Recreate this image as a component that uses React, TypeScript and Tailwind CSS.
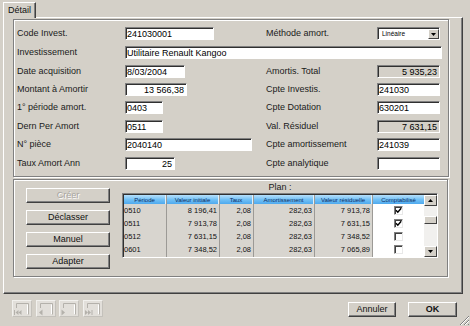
import React from "react";

const FONT = "font-['Liberation_Sans',Arial,sans-serif]";

function Input({
  w,
  value = "",
  right = false,
  gray = false,
}: {
  w: string;
  value?: string;
  right?: boolean;
  gray?: boolean;
}) {
  return (
    <div
      className={`${w} h-[13px] shrink-0 ${gray ? "bg-[#d4d0c8]" : "bg-white"} border border-t-[#808080] border-l-[#808080] border-b-white border-r-white`}
    >
      <div
        className={`h-full w-full border-t border-l border-t-[#303030] border-l-[#303030] flex items-center ${right ? "justify-end pr-[2px]" : "pl-[0px]"} text-[9px] leading-none text-black whitespace-nowrap overflow-hidden`}
      >
        {value}
      </div>
    </div>
  );
}

function Label({ children, w }: { children: React.ReactNode; w: string }) {
  return (
    <div className={`${w} shrink-0 text-[9px] leading-none text-[#1a1a1a] whitespace-nowrap`}>
      {children}
    </div>
  );
}

function Btn({
  children,
  w,
  disabled = false,
  bold = false,
}: {
  children: React.ReactNode;
  w: string;
  disabled?: boolean;
  bold?: boolean;
}) {
  return (
    <div
      className={`${w} h-[15px] shrink-0 bg-[#d4d0c8] border border-t-white border-l-white border-b-[#404040] border-r-[#404040] shadow-[inset_-1px_-1px_0_#808080] flex items-center justify-center text-[9px] leading-none ${bold ? "font-bold" : ""} ${disabled ? "text-[#a8a5a0] [text-shadow:1px_1px_0_#fff]" : "text-[#111]"}`}
    >
      {children}
    </div>
  );
}

function Check({ on }: { on: boolean }) {
  return (
    <div className="w-[9px] h-[9px] bg-white border border-t-[#808080] border-l-[#808080] border-b-[#e8e8e8] border-r-[#e8e8e8] shadow-[inset_1px_1px_0_#404040] flex items-center justify-center">
      {on && (
        <svg width="7" height="7" viewBox="0 0 7 7">
          <path d="M1 3.2 L2.8 5.2 L6.2 1.2" stroke="#000" strokeWidth="1.4" fill="none" />
        </svg>
      )}
    </div>
  );
}

type Col = { title: string; w: string; vals: string[]; align: string; white?: boolean };

const rowsData = [
  ["0510", "8 196,41", "2,08", "282,63", "7 913,78"],
  ["0511", "7 913,78", "2,08", "282,63", "7 631,15"],
  ["0512", "7 631,15", "2,08", "282,63", "7 348,52"],
  ["0601", "7 348,52", "2,08", "282,63", "7 065,89"],
];

const cols: Col[] = [
  { title: "Période", w: "w-[43px]", vals: rowsData.map((r) => r[0]), align: "justify-start pl-[0px]" },
  { title: "Valeur initiale", w: "w-[53px]", vals: rowsData.map((r) => r[1]), align: "justify-end pr-[2px]" },
  { title: "Taux", w: "w-[34px]", vals: rowsData.map((r) => r[2]), align: "justify-end pr-[2px]" },
  { title: "Amortissement", w: "w-[61px]", vals: rowsData.map((r) => r[3]), align: "justify-end pr-[2px]" },
  { title: "Valeur résiduelle", w: "w-[58px]", vals: rowsData.map((r) => r[4]), align: "justify-end pr-[2px]" },
];

function NavIcon({ kind }: { kind: number }) {
  const c = "#b4b1ab";
  return (
    <div className="w-[20px] h-[17px] shrink-0 bg-[#e2dfda] border border-t-[#f2f1ee] border-l-[#f2f1ee] border-b-[#c4c1bb] border-r-[#c4c1bb]">
      <svg width="18" height="15" viewBox="0 0 18 15">
        <path d="M3.5 7 V2.5 H15.5 V13.5" stroke={c} strokeWidth="1" fill="none" />
        <path d="M14.5 3.5 V13" stroke="#ffffff" strokeWidth="1" fill="none" />
        {kind === 0 && (
          <g fill={c}>
            <rect x="1" y="9" width="1" height="5" />
            <path d="M2.5 11.5 L5.5 9 V14 Z" />
            <path d="M5.5 11.5 L8.5 9 V14 Z" />
          </g>
        )}
        {kind === 1 && (
          <g fill={c}>
            <path d="M2 11.5 L5.5 8.5 V14.5 Z" />
          </g>
        )}
        {kind === 2 && (
          <g fill={c}>
            <path d="M5 11.5 L1.5 8.5 V14.5 Z" />
          </g>
        )}
        {kind === 3 && (
          <g fill={c}>
            <path d="M4 11.5 L1 9 V14 Z" />
            <path d="M7 11.5 L4 9 V14 Z" />
            <rect x="7.5" y="9" width="1" height="5" />
          </g>
        )}
      </svg>
    </div>
  );
}

export default function App() {
  return (
    <div className={`${FONT} w-[470px] h-[326px] bg-[#d4d0c8] overflow-hidden relative select-none`}>
      {/* Tab row */}
      <div className="h-[17px] pt-[2px] pl-[3px] flex">
        <div className="relative z-10 w-[33px] h-[16px] bg-[#d4d0c8] border-t border-l border-r border-t-white border-l-white border-r-[#404040] shadow-[inset_-1px_0_0_#808080] flex items-start justify-center pt-[3px] text-[9px] leading-none text-[#111]">
          Détail
        </div>
      </div>

      {/* Panel */}
      <div className="ml-[3px] w-[460px] h-[277px] border border-t-white border-l-white border-b-[#404040] border-r-[#404040] shadow-[inset_-1px_-1px_0_#808080]">
        {/* Group box 1 */}
        <div className="ml-[9px] mt-[1px] w-[436px] h-[158px] border border-[#808080] shadow-[1px_1px_0_#fff,inset_1px_1px_0_#fff] pl-[3px] flex flex-col">
          <div className="mt-[7px] h-[13px] flex items-center">
            <Label w="w-[108px]">Code Invest.</Label>
            <div className="w-[141px] shrink-0"><Input w="w-[89px]" value="241030001" /></div>
            <Label w="w-[111px]">Méthode amort.</Label>
            <div className="w-[63px] h-[13px] shrink-0 bg-white border border-t-[#808080] border-l-[#808080] border-b-white border-r-white">
              <div className="h-full w-full border-t border-l border-t-[#303030] border-l-[#303030] flex items-center justify-between">
                <span className="pl-[3px] text-[6.5px] leading-none text-black">Linéaire</span>
                <div className="w-[11px] h-[10px] bg-[#d4d0c8] border border-t-white border-l-white border-b-[#404040] border-r-[#404040] flex items-center justify-center">
                  <svg width="5" height="3" viewBox="0 0 5 3"><path d="M0 0 H5 L2.5 3 Z" fill="#000" /></svg>
                </div>
              </div>
            </div>
          </div>

          <div className="mt-[6px] h-[13px] flex items-center">
            <Label w="w-[108px]">Investissement</Label>
            <Input w="w-[317px]" value="Utilitaire Renault Kangoo" />
          </div>

          <div className="mt-[6px] h-[13px] flex items-center">
            <Label w="w-[108px]">Date acquisition</Label>
            <div className="w-[141px] shrink-0"><Input w="w-[60px]" value="8/03/2004" /></div>
            <Label w="w-[111px]">Amortis. Total</Label>
            <Input w="w-[63px]" value="5 935,23" right gray />
          </div>

          <div className="mt-[5px] h-[13px] flex items-center">
            <Label w="w-[108px]">Montant à Amortir</Label>
            <div className="w-[141px] shrink-0"><Input w="w-[62px]" value="13 566,38" right /></div>
            <Label w="w-[111px]">Cpte Investis.</Label>
            <Input w="w-[63px]" value="241030" />
          </div>

          <div className="mt-[5px] h-[13px] flex items-center">
            <Label w="w-[108px]">1° période amort.</Label>
            <div className="w-[141px] shrink-0"><Input w="w-[38px]" value="0403" /></div>
            <Label w="w-[111px]">Cpte Dotation</Label>
            <Input w="w-[63px]" value="630201" />
          </div>

          <div className="mt-[6px] h-[13px] flex items-center">
            <Label w="w-[108px]">Dern Per Amort</Label>
            <div className="w-[141px] shrink-0"><Input w="w-[38px]" value="0511" /></div>
            <Label w="w-[111px]">Val. Résiduel</Label>
            <Input w="w-[63px]" value="7 631,15" right gray />
          </div>

          <div className="mt-[5px] h-[13px] flex items-center">
            <Label w="w-[108px]">N° pièce</Label>
            <div className="w-[141px] shrink-0"><Input w="w-[127px]" value="2040140" /></div>
            <Label w="w-[111px]">Cpte amortissement</Label>
            <Input w="w-[63px]" value="241039" />
          </div>

          <div className="mt-[6px] h-[13px] flex items-center">
            <Label w="w-[108px]">Taux Amort Ann</Label>
            <div className="w-[141px] shrink-0"><Input w="w-[50px]" value="25" right /></div>
            <Label w="w-[111px]">Cpte analytique</Label>
            <Input w="w-[63px]" value="" />
          </div>
        </div>

        {/* Group box 2 */}
        <div className="ml-[9px] mt-[2px] w-[435px] h-[98px] border border-[#808080] shadow-[1px_1px_0_#fff,inset_1px_1px_0_#fff] flex">
          <div className="ml-[12px] mt-[8px] flex flex-col gap-[7px]">
            <Btn w="w-[84px]" disabled>Créer</Btn>
            <Btn w="w-[84px]">Déclasser</Btn>
            <Btn w="w-[84px]">Manuel</Btn>
            <Btn w="w-[84px]">Adapter</Btn>
          </div>

          <div className="ml-[12px] flex flex-col">
            <div className="mt-[1px] h-[12px] flex items-center justify-center text-[9px] leading-none text-[#1a1a1a]">
              Plan :
            </div>
            <div className="w-[316px] h-[65px] border border-t-[#808080] border-l-[#808080] border-b-white border-r-white">
              <div className="w-full h-full border-t border-l border-t-[#303030] border-l-[#303030] flex bg-[#d8d5cf]">
                {cols.map((c) => (
                  <div key={c.title} className={`${c.w} shrink-0 flex flex-col border-r border-r-[#9c9a96]`}>
                    <div className="h-[9px] bg-gradient-to-b from-[#b6e0fb] via-[#72c1f5] to-[#4ea9ee] border-r border-r-[#dff1fd] flex items-center justify-center text-[6px] leading-none text-[#0d2b62] whitespace-nowrap overflow-hidden">
                      {c.title}
                    </div>
                    {c.vals.map((v, i) => (
                      <div key={i} className={`h-[13px] flex items-center ${c.align} text-[7.5px] leading-none text-[#111] whitespace-nowrap`}>
                        {v}
                      </div>
                    ))}
                  </div>
                ))}
                <div className="w-[51px] shrink-0 flex flex-col bg-white">
                  <div className="h-[9px] bg-gradient-to-b from-[#b6e0fb] via-[#72c1f5] to-[#4ea9ee] flex items-center justify-center text-[6px] leading-none text-[#0d2b62] whitespace-nowrap">
                    Comptabilisé
                  </div>
                  {[true, true, false, false].map((on, i) => (
                    <div key={i} className="h-[13px] flex items-center justify-center">
                      <Check on={on} />
                    </div>
                  ))}
                </div>
                <div className="w-[13px] shrink-0 flex flex-col bg-[#f1f0ee]">
                  <div className="h-[11px] bg-[#d4d0c8] border border-t-white border-l-white border-b-[#404040] border-r-[#404040] flex items-center justify-center">
                    <svg width="5" height="3" viewBox="0 0 5 3"><path d="M0 3 H5 L2.5 0 Z" fill="#000" /></svg>
                  </div>
                  <div className="flex-1 flex flex-col">
                    <div className="mt-[10px] h-[8px] bg-[#d4d0c8] border border-t-white border-l-white border-b-[#404040] border-r-[#404040]" />
                  </div>
                  <div className="h-[11px] bg-[#d4d0c8] border border-t-white border-l-white border-b-[#404040] border-r-[#404040] flex items-center justify-center">
                    <svg width="5" height="3" viewBox="0 0 5 3"><path d="M0 0 H5 L2.5 3 Z" fill="#000" /></svg>
                  </div>
                </div>
              </div>
            </div>
          </div>
        </div>
      </div>

      {/* Bottom bar */}
      <div className="h-[32px] flex items-start">
        <div className="ml-[12px] mt-[6px] flex">
          <NavIcon kind={0} />
          <div className="ml-[4px]"><NavIcon kind={1} /></div>
          <div className="ml-[3px]"><NavIcon kind={2} /></div>
          <div className="ml-[4px]"><NavIcon kind={3} /></div>
        </div>
        <div className="ml-auto mr-[13px] mt-[8px] flex gap-[12px]">
          <Btn w="w-[48px]">Annuler</Btn>
          <Btn w="w-[49px]" bold>OK</Btn>
        </div>
      </div>

      {/* Resize grip */}
      <svg className="absolute right-0 bottom-0" width="12" height="12" viewBox="0 0 12 12">
        <path d="M11 2 L2 11 M11 6 L6 11 M11 10 L10 11" stroke="#808080" strokeWidth="1" />
        <path d="M11 3 L3 11 M11 7 L7 11" stroke="#ffffff" strokeWidth="1" />
      </svg>
    </div>
  );
}
